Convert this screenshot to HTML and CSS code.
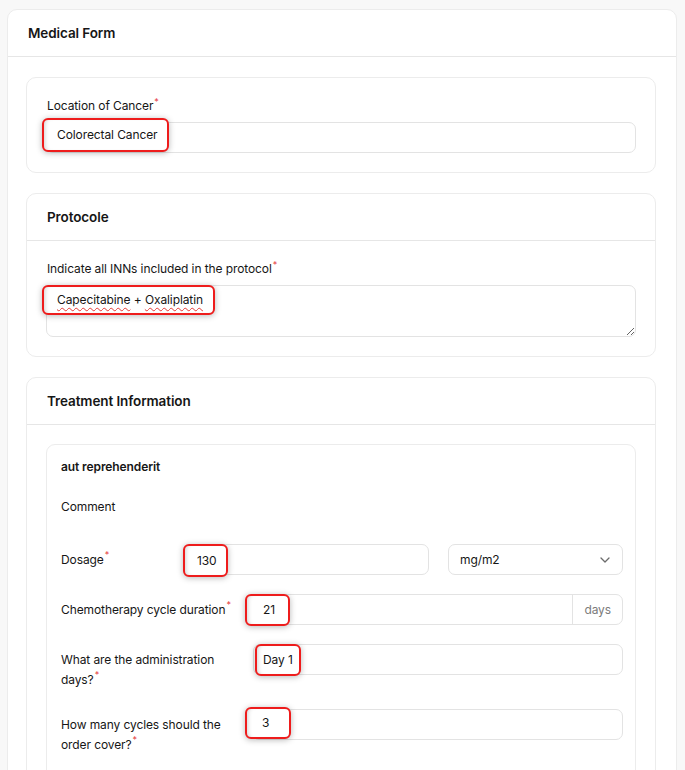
FILE: index.html
```html
<!DOCTYPE html>
<html lang="en">
<head>
    <meta charset="UTF-8">
    <meta name="viewport" content="width=device-width, initial-scale=1.0">
    <title>Medical Form</title>
    <link rel="stylesheet" href="styles.css">
</head>
<body>

    <div class="panel">
        <div class="panel-head">Medical Form</div>
        <div class="panel-body">

            <!-- Location -->
            <section class="card">
                <div class="card-body">
                    <div class="field-label">Location of Cancer<span class="req">*</span></div>
                    <div class="field">
                        <span class="mark mark-location">Colorectal Cancer</span>
                    </div>
                </div>
            </section>

            <!-- Protocol -->
            <section class="card">
                <div class="card-head">Protocole</div>
                <div class="card-body">
                    <div class="field-label">Indicate all INNs included in the protocol<span class="req">*</span></div>
                    <div class="area-wrap">
                        <textarea class="area" rows="2" spellcheck="false"></textarea>
                        <span class="mark mark-area"><span class="typo">Capecitabine</span> + <span class="typo">Oxaliplatin</span></span>
                    </div>
                </div>
            </section>

            <!-- Treatment -->
            <section class="card">
                <div class="card-head">Treatment Information</div>
                <div class="card-body">
                    <div class="item">
                        <div class="item-title">aut reprehenderit</div>
                        <div class="item-comment">Comment</div>

                        <div class="row row-dosage">
                            <div class="row-label">Dosage<span class="req">*</span></div>
                            <div class="field field-grow">
                                <span class="mark mark-dose">130</span>
                            </div>
                            <div class="field select">
                                <span>mg/m2</span>
                                <svg width="10" height="6" viewBox="0 0 10 6"><path d="M1 1l4 4 4-4" fill="none" stroke="#6b6b6b" stroke-width="1.3" stroke-linecap="round" stroke-linejoin="round"/></svg>
                            </div>
                        </div>

                        <div class="row row-cycle">
                            <div class="row-label">Chemotherapy cycle duration<span class="req">*</span></div>
                            <div class="field field-grow field-addon">
                                <div class="field-value">
                                    <span class="mark mark-cycle">21</span>
                                </div>
                                <div class="addon">days</div>
                            </div>
                        </div>

                        <div class="row row-days">
                            <div class="row-label">What are the administration days?<span class="req">*</span></div>
                            <div class="field field-grow">
                                <span class="mark mark-days">Day 1</span>
                            </div>
                        </div>

                        <div class="row row-count">
                            <div class="row-label">How many cycles should the order cover?<span class="req">*</span></div>
                            <div class="field field-grow">
                                <span class="mark mark-count">3</span>
                            </div>
                        </div>
                    </div>
                </div>
            </section>

        </div>
    </div>

</body>
</html>
```

FILE: styles.css
```css
html, body {
    overflow: hidden;
}
body {
    font-family: Inter, "Noto Sans", sans-serif;
    font-size: 12px;
    letter-spacing: -0.1px;
    color: #161616;
    margin: 0;
    padding: 9px 8px 0 7px;
    background-color: #f8f8f8;
}
.panel {
    background: #fff;
    border: 1px solid #ececec;
    border-radius: 10px;
}
.panel-head {
    padding: 14px 20px;
    line-height: 18px;
    font-size: 13.5px;
    font-weight: 600;
    border-bottom: 1px solid #e6e6e6;
}
.panel-body {
    padding: 20px 20px 20px 18px;
    display: flex;
    flex-direction: column;
    gap: 20px;
}
.card {
    border: 1px solid #ececec;
    border-radius: 10px;
}
.card-head {
    padding: 14px 20px;
    line-height: 18px;
    font-size: 13.5px;
    font-weight: 600;
    border-bottom: 1px solid #e6e6e6;
}
.card-body {
    padding: 19px;
}
.field-label {
    line-height: 18px;
    margin-bottom: 7px;
    padding-left: 1px;
}
.req {
    color: #e5383b;
    font-size: 9px;
    vertical-align: top;
    line-height: 10px;
    margin-left: 1px;
}

/* Inputs */
.field {
    box-sizing: border-box;
    height: 31px;
    border: 1px solid #e3e3e3;
    border-radius: 7px;
    padding: 0 11px;
    display: flex;
    align-items: flex-start;
}
.field-grow {
    flex: 1;
}
.area-wrap {
    position: relative;
}
.area {
    display: block;
    box-sizing: border-box;
    width: 100%;
    height: 52px;
    margin: 1px 0 0;
    border: 1px solid #e3e3e3;
    border-radius: 7px;
    background: #fff;
    font: inherit;
    outline: none;
}

/* Red highlight boxes around the filled values */
.mark {
    box-sizing: border-box;
    display: inline-block;
    height: 33px;
    line-height: 29px;
    margin-top: -1px;
    border: 2px solid #ee1c1c;
    border-radius: 6px;
    background: #fff;
    box-shadow: 0 1px 6px rgba(0, 0, 0, 0.28), inset 4px 0 4px -3px rgba(0, 0, 0, 0.18);
    white-space: nowrap;
}
.mark-location {
    height: 34px;
    line-height: 30px;
    margin: -5px 0 0 -16px;
    padding: 0 9px 0 13px;
}
.mark-area {
    position: absolute;
    left: -4px;
    top: 1px;
    height: 30px;
    line-height: 26px;
    padding: 0 10px 0 13px;
}
.typo {
    text-decoration: underline wavy #e53935;
    text-decoration-thickness: 1px;
    text-underline-offset: 3px;
}
.mark-dose {
    margin-left: -14px;
    padding: 0 9px 0 12px;
}
.mark-cycle {
    height: 32px;
    line-height: 28px;
    margin-left: -19px;
    padding: 0 13px 0 16px;
}
.mark-days {
    height: 32px;
    line-height: 28px;
    margin-left: -10px;
    padding: 0 6px 0 6px;
}
.mark-count {
    height: 32px;
    line-height: 28px;
    margin: -3px 0 0 -19px;
    padding: 0 20px 0 15px;
}

/* Treatment item */
.item {
    border: 1px solid #ececec;
    border-radius: 9px;
    padding: 13px 12px 40px 14px;
}
.item-title {
    line-height: 18px;
    font-weight: 600;
}
.item-comment {
    line-height: 18px;
    margin: 22px 0 28px;
}
.row {
    display: flex;
    align-items: flex-start;
    margin-bottom: 19px;
}
.row-label {
    flex: none;
    padding-top: 6px;
    line-height: 20px;
}
.row-dosage .row-label {
    width: 124px;
}
.row-cycle .row-label {
    width: 171px;
    margin-right: 20px;
}
.row-days .row-label {
    width: 172px;
    margin-right: 20px;
}
.row-count .row-label {
    width: 171px;
    margin-right: 20px;
}
.select {
    flex: none;
    width: 175px;
    margin-left: 19px;
    align-items: center;
    justify-content: space-between;
    padding: 0 12px 0 11px;
}
.field-addon {
    padding: 0;
}
.field-value {
    flex: 1;
    padding: 0 11px;
    display: flex;
    align-items: flex-start;
}
.addon {
    align-self: stretch;
    display: flex;
    align-items: center;
    padding: 0 11px;
    border-left: 1px solid #e3e3e3;
    color: #7c7c7c;
}
```
